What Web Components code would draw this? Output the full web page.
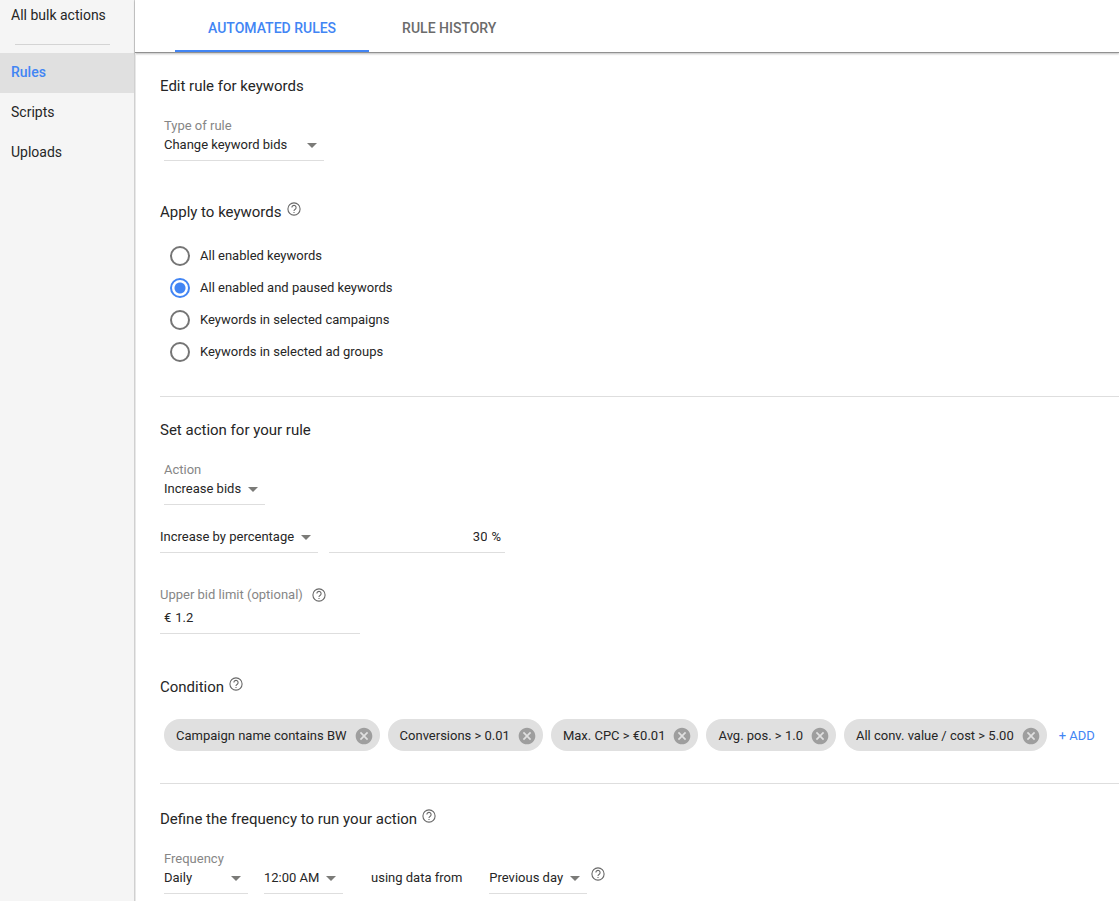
<!DOCTYPE html>
<html lang="en">
<head>
<meta charset="utf-8">
<title>Automated rules</title>
<style>
  html, body { margin: 0; }
  body {
    font: 400 13px/16px Roboto, "Liberation Sans", sans-serif;
    color: #262626;
    background: #fff;
    --accent: #4285f4;
    --line: #dedede;
    --muted: #868686;
  }
</style>
</head>
<body>
<bulk-app></bulk-app>

<script>
const define = (name, html, setup) => {
  const template = document.createElement('template');
  template.innerHTML = html;
  customElements.define(name, class extends HTMLElement {
    connectedCallback() {
      if (this.shadowRoot) return;
      const root = this.attachShadow({ mode: 'open' });
      root.append(template.content.cloneNode(true));
      if (setup) setup(this, root);
    }
  });
};

define('help-tip', `
  <style>
    :host { display: block; width: 14px; height: 14px; color: #686868; }
    button { display: block; padding: 0; border: 0; background: none; color: inherit; }
    svg { display: block; width: 14px; height: 14px; }
  </style>
  <button type="button" aria-label="Help"><svg viewBox="0 0 14 14" fill="none" stroke="currentColor" stroke-width="1.1"><circle cx="7" cy="7" r="6.1"/><path d="M4.900 5.600a2.100 2.100 0 1 1 3.600 1.400C7.700 7.700 7 8 7 9"/><path d="M7 9.900v1.200"/></svg></button>
`);

define('nav-item', `
  <style>
    :host { display: block; }
    a { display: block; padding: 0 11px; font-size: 14px; line-height: 38px; height: 40px; color: inherit; text-decoration: none; }
    :host([active]) a { background: #e0e0e0; color: var(--accent); font-weight: 500; }
  </style>
  <a href="#"><slot></slot></a>
`);

define('side-nav', `
  <style>
    :host { display: block; background: #f5f5f5; border-right: 1px solid #d0d0d0; }
    .top { display: block; padding: 5px 11px 19px; font-size: 14px; line-height: 20px; color: inherit; text-decoration: none; }
    hr { margin: 0 24px 8px 15px; border: 0; border-top: 1px solid #d4d4d4; }
  </style>
  <nav>
    <a class="top" href="#">All bulk actions</a>
    <hr>
    <slot></slot>
  </nav>
`);

define('tab-item', `
  <style>
    :host { display: block; }
    button {
      box-sizing: border-box; height: 52px; padding: 8px 33px 2px; border: 0; border-bottom: 2px solid transparent;
      background: none; color: #6b6b6b; font: 500 14px/20px Roboto, sans-serif;
    }
    :host([active]) button { color: var(--accent); border-color: var(--accent); }
  </style>
  <button type="button" role="tab"><slot></slot></button>
`);

define('tab-bar', `
  <style>
    :host { display: flex; padding-left: 40px; border-bottom: 1px solid #919191; box-shadow: 0 1px 2px rgba(0,0,0,.25); }
  </style>
  <slot></slot>
`);

define('form-section', `
  <style>
    :host { display: block; }
    header { display: flex; gap: 5px; height: 20px; }
    h2 { margin: 0; font-size: 15px; line-height: 20px; font-weight: 400; }
  </style>
  <section>
    <header><h2></h2></header>
    <slot></slot>
  </section>
`, (host, root) => {
  root.querySelector('h2').textContent = host.getAttribute('heading');
  if (host.hasAttribute('help')) root.querySelector('header').append(document.createElement('help-tip'));
});

define('select-field', `
  <style>
    :host { display: block; }
    label { display: block; height: 16px; color: var(--muted); }
    label[hidden] { display: none; }
    .box { display: flex; align-items: center; height: 22px; padding: 0 7px 4px 0; border-bottom: 1px solid var(--line); }
    select {
      flex: 1; min-width: 0; margin: 0; padding: 0; border: 0; border-radius: 0; outline: 0;
      appearance: none; background: none; font: inherit; color: inherit;
    }
    svg { flex: none; width: 10px; height: 5px; fill: #7b7b78; }
  </style>
  <label for="s"></label>
  <div class="box"><select id="s"><option></option></select><svg viewBox="0 0 10 5"><path d="M0 0h10L5 5z"/></svg></div>
`, (host, root) => {
  const label = root.querySelector('label');
  label.textContent = host.getAttribute('label') || '';
  label.hidden = !host.hasAttribute('label');
  root.querySelector('option').textContent = host.getAttribute('value');
  if (label.hidden) root.querySelector('select').setAttribute('aria-label', host.getAttribute('name'));
});

define('text-field', `
  <style>
    :host { display: block; }
    .head { display: flex; align-items: center; gap: 9px; height: 16px; margin-bottom: 4px; color: var(--muted); }
    .head[hidden] { display: none; }
    .box { display: flex; align-items: center; gap: 4px; height: 22px; padding: 0 4px 4px; border-bottom: 1px solid var(--line); }
    input { flex: 1; min-width: 0; margin: 0; padding: 0; border: 0; outline: 0; background: none; font: inherit; color: inherit; }
    :host([align=end]) input { text-align: right; }
  </style>
  <div class="head"><label for="t"></label><help-tip></help-tip></div>
  <div class="box"><slot name="prefix"></slot><input id="t" type="text"><slot name="suffix"></slot></div>
`, (host, root) => {
  root.querySelector('label').textContent = host.getAttribute('label') || '';
  root.querySelector('.head').hidden = !host.hasAttribute('label');
  const input = root.querySelector('input');
  input.value = host.getAttribute('value');
  if (!host.hasAttribute('label')) input.setAttribute('aria-label', host.getAttribute('name'));
});

define('radio-list', `
  <style>
    :host { display: block; padding: 18px 10px 0; }
    label { display: flex; align-items: center; gap: 10px; height: 32px; }
    input {
      box-sizing: border-box; width: 20px; height: 20px; margin: 0; flex: none; appearance: none;
      border: 2px solid #757575; border-radius: 50%;
    }
    input:checked { border-color: var(--accent); background: radial-gradient(circle, var(--accent) 5px, transparent 6px); }
  </style>
  <div role="radiogroup" aria-label="Apply to keywords">
    <label><input type="radio" name="scope"><span>All enabled keywords</span></label>
    <label><input type="radio" name="scope" checked><span>All enabled and paused keywords</span></label>
    <label><input type="radio" name="scope"><span>Keywords in selected campaigns</span></label>
    <label><input type="radio" name="scope"><span>Keywords in selected ad groups</span></label>
  </div>
`);

define('filter-chip', `
  <style>
    :host { box-sizing: border-box; display: flex; align-items: center; gap: 7px; height: 32px; padding: 1px 6px 0 12px; border-radius: 16px; background: #e0e0e0; white-space: nowrap; }
    button { display: block; padding: 0; border: 0; background: none; }
    svg { display: block; width: 20px; height: 20px; fill: #9e9e9e; }
  </style>
  <slot></slot>
  <button type="button" aria-label="Remove"><svg viewBox="0 0 24 24"><path d="M12 2C6.470 2 2 6.470 2 12s4.470 10 10 10 10-4.470 10-10S17.530 2 12 2zm5 13.590L15.590 17 12 13.410 8.410 17 7 15.590 10.590 12 7 8.410 8.410 7 12 10.590 15.590 7 17 8.410 13.410 12 17 15.590z"/></svg></button>
`);

define('bulk-app', `
  <style>
    :host { display: grid; grid-template-columns: 135px 1fr; min-height: 100vh; }
    main { display: flex; flex-direction: column; min-width: 0; }
    .content { flex: 1; padding: 23px 0 7px 24px; border-left: 1px solid #e8e8e8; }
    .inset { margin-left: 4px; }
    .gap { margin-top: 22px; }
    .w-rule { width: 160px; }
    .w-action { width: 101px; }
    .w-by { width: 158px; }
    .w-amount { width: 176px; }
    .w-limit { width: 200px; }
    .w-freq { width: 84px; }
    .w-time { width: 79px; }
    .w-range { width: 98px; }
    hr { margin: 0; border: 0; border-top: 1px solid var(--line); }
    .row { display: flex; gap: 11px; margin-top: 21px; }
    .limit { margin-top: 34px; }
    .scope { margin-top: 41px; padding-bottom: 28px; }
    .action { margin-top: 23px; }
    .condition { margin-top: 43px; padding-bottom: 32px; }
    .frequency { margin-top: 25px; }
    .chips { display: flex; flex-wrap: wrap; align-items: center; gap: 8px; margin: 22px 0 0 4px; }
    .add { padding: 2px 4px 0; border: 0; background: none; color: var(--accent); font: inherit; }
    .schedule { display: flex; align-items: flex-end; gap: 16px; margin: 22px 0 0 4px; }
    .schedule span { padding: 0 11px 8px 12px; }
    .schedule .range { display: flex; gap: 4px; }
  </style>
  <side-nav>
    <nav-item active>Rules</nav-item>
    <nav-item>Scripts</nav-item>
    <nav-item>Uploads</nav-item>
  </side-nav>
  <main>
    <tab-bar role="tablist">
      <tab-item active>AUTOMATED RULES</tab-item>
      <tab-item>RULE HISTORY</tab-item>
    </tab-bar>
    <div class="content">
      <form-section heading="Edit rule for keywords">
        <select-field class="inset gap w-rule" label="Type of rule" value="Change keyword bids"></select-field>
      </form-section>
      <form-section class="scope" heading="Apply to keywords" help>
        <radio-list></radio-list>
      </form-section>
      <hr>
      <form-section class="action" heading="Set action for your rule">
        <select-field class="inset gap w-action" label="Action" value="Increase bids"></select-field>
        <div class="row">
          <select-field class="w-by" name="Change type" value="Increase by percentage"></select-field>
          <text-field class="w-amount" name="Percentage" align="end" value="30"><span slot="suffix">%</span></text-field>
        </div>
        <text-field class="limit w-limit" label="Upper bid limit (optional)" value="1.2"><span slot="prefix">€</span></text-field>
      </form-section>
      <form-section class="condition" heading="Condition" help>
        <div class="chips">
          <filter-chip>Campaign name contains BW</filter-chip>
          <filter-chip>Conversions &gt; 0.01</filter-chip>
          <filter-chip>Max. CPC &gt; €0.01</filter-chip>
          <filter-chip>Avg. pos. &gt; 1.0</filter-chip>
          <filter-chip>All conv. value / cost &gt; 5.00</filter-chip>
          <button class="add" type="button">+ ADD</button>
        </div>
      </form-section>
      <hr>
      <form-section class="frequency" heading="Define the frequency to run your action" help>
        <div class="schedule">
          <select-field class="w-freq" label="Frequency" value="Daily"></select-field>
          <select-field class="w-time" name="Time" value="12:00 AM"></select-field>
          <span>using data from</span>
          <div class="range">
            <select-field class="w-range" name="Data range" value="Previous day"></select-field>
            <help-tip></help-tip>
          </div>
        </div>
      </form-section>
    </div>
  </main>
`);
</script>
</body>
</html>
